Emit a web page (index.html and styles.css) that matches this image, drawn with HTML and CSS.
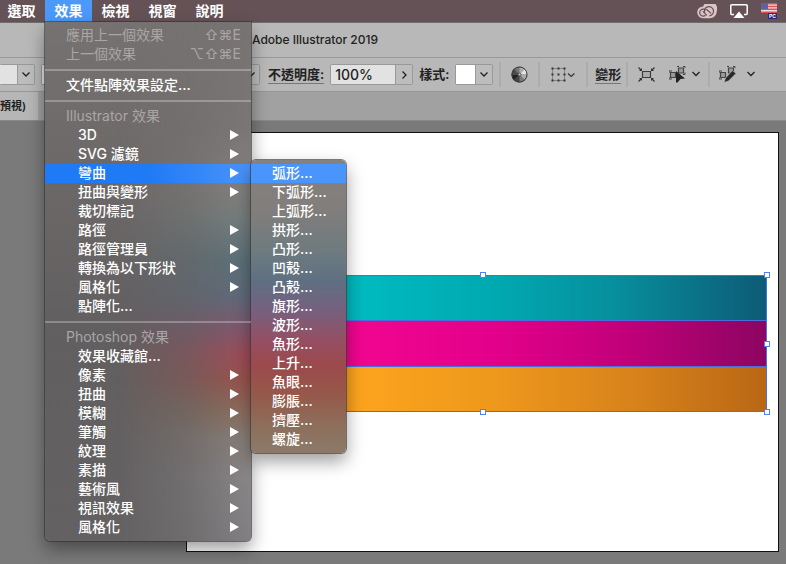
FILE: index.html
```
<!DOCTYPE html>
<html lang="zh-Hant">
<head>
<meta charset="utf-8">
<title>Adobe Illustrator 2019</title>
<link rel="stylesheet" href="styles.css">
</head>
<body>
<header class="menubar">
  <nav class="menubar-items">
    <button class="menubar-item">選取</button>
    <div class="menubar-slot">
      <button class="menubar-item open">效果</button>
      <ul class="menu">
        <li><button class="item top disabled">應用上一個效果<span class="keys">⇧⌘E</span></button></li>
        <li><button class="item top disabled">上一個效果<span class="keys">⌥⇧⌘E</span></button></li>
        <li class="rule"></li>
        <li><button class="item top">文件點陣效果設定...</button></li>
        <li class="rule"></li>
        <li class="item top disabled">Illustrator 效果</li>
        <li><button class="item more">3D</button></li>
        <li><button class="item more">SVG 濾鏡</button></li>
        <li class="has-sub">
          <button class="item more active">彎曲</button>
          <ul class="submenu">
            <li><button class="item chosen">弧形...</button></li>
            <li><button class="item">下弧形...</button></li>
            <li><button class="item">上弧形...</button></li>
            <li><button class="item">拱形...</button></li>
            <li><button class="item">凸形...</button></li>
            <li><button class="item">凹殼...</button></li>
            <li><button class="item">凸殼...</button></li>
            <li><button class="item">旗形...</button></li>
            <li><button class="item">波形...</button></li>
            <li><button class="item">魚形...</button></li>
            <li><button class="item">上升...</button></li>
            <li><button class="item">魚眼...</button></li>
            <li><button class="item">膨脹...</button></li>
            <li><button class="item">擠壓...</button></li>
            <li><button class="item">螺旋...</button></li>
          </ul>
        </li>
        <li><button class="item more">扭曲與變形</button></li>
        <li><button class="item">裁切標記</button></li>
        <li><button class="item more">路徑</button></li>
        <li><button class="item more">路徑管理員</button></li>
        <li><button class="item more">轉換為以下形狀</button></li>
        <li><button class="item more">風格化</button></li>
        <li><button class="item">點陣化...</button></li>
        <li class="rule"></li>
        <li class="item top disabled">Photoshop 效果</li>
        <li><button class="item">效果收藏館...</button></li>
        <li><button class="item more">像素</button></li>
        <li><button class="item more">扭曲</button></li>
        <li><button class="item more">模糊</button></li>
        <li><button class="item more">筆觸</button></li>
        <li><button class="item more">紋理</button></li>
        <li><button class="item more">素描</button></li>
        <li><button class="item more">藝術風</button></li>
        <li><button class="item more">視訊效果</button></li>
        <li><button class="item more">風格化</button></li>
      </ul>
    </div>
    <button class="menubar-item">檢視</button>
    <button class="menubar-item">視窗</button>
    <button class="menubar-item">說明</button>
  </nav>
  <div class="status">
    <svg width="20" height="15" viewBox="0 0 20 15">
      <path d="M6 14.200A5.900 5.900 0 0 1 6.200 2.400A7.200 7.200 0 0 1 19.800 7.200A7 7 0 0 1 12.800 14.200Z" fill="#dcc3c8"/>
      <path d="M8.900 6.400A3.500 3.500 0 1 0 8.500 11.200M10 11.400L5.800 7.400M7.800 9.200A4.600 4.600 0 1 1 12.400 11.800M14 9.400L9.500 5.200" fill="none" stroke="#655257" stroke-width="1.200"/>
    </svg>
    <svg width="18" height="15" viewBox="0 0 18 15">
      <path d="M4 10.500H1.800A1 1 0 0 1 .8 9.500V1.800A1 1 0 0 1 1.800 .8H16.200A1 1 0 0 1 17.200 1.800V9.500A1 1 0 0 1 16.200 10.500H14" fill="none" stroke="#fff" stroke-width="1.500"/>
      <path d="M9 7.500L14.500 14H3.500Z" fill="#fff"/>
    </svg>
    <svg width="17" height="16" viewBox="0 0 17 16">
      <path d="M0 0H16V10H0Z" fill="#f0dcdc"/>
      <path d="M0 .7H16M0 3.500H16M0 6.300H16M0 9.200H16" stroke="#d8545a" stroke-width="1.400"/>
      <path d="M0 0H7V6H0Z" fill="#62629a"/>
      <path d="M7 10H16V16H7Z" fill="#28287a"/>
      <text x="8" y="15" class="flag-text">PC</text>
    </svg>
  </div>
</header>

<div class="titlebar">Adobe Illustrator 2019</div>

<div class="controls">
  <div class="field">
    <input class="box stub" aria-label="筆畫">
    <button class="box drop" aria-label="展開"><svg width="8" height="5" viewBox="0 0 8 5"><path d="M.5 .5L4 4L7.500 .5"/></svg></button>
  </div>
  <div class="field profile">
    <input class="box" aria-label="描述檔">
    <button class="box drop" aria-label="展開"><svg width="8" height="5" viewBox="0 0 8 5"><path d="M.5 .5L4 4L7.500 .5"/></svg></button>
  </div>
  <label class="caption linked" for="opacity">不透明度:</label>
  <div class="field">
    <input class="box opacity" id="opacity" value="100%">
    <button class="box drop" aria-label="展開"><svg width="5" height="8" viewBox="0 0 5 8"><path d="M.5 .5L4 4L.5 7.500"/></svg></button>
  </div>
  <span class="caption">樣式:</span>
  <div class="field">
    <button class="box swatch" aria-label="樣式"></button>
    <button class="box drop" aria-label="展開"><svg width="8" height="5" viewBox="0 0 8 5"><path d="M.5 .5L4 4L7.500 .5"/></svg></button>
  </div>
  <div class="cell wheel">
    <button class="tool" aria-label="重新上色"><svg width="17" height="17" viewBox="0 0 17 17">
      <circle cx="8.500" cy="8.500" r="8" fill="#777"/>
      <path d="M8.500 8.500V.5A8 8 0 0 1 14 2.800Z" fill="#aaa"/>
      <path d="M8.500 8.500L14 2.800A8 8 0 0 1 16.500 8.500Z" fill="#e2e2e2"/>
      <path d="M8.500 8.500H16.500A8 8 0 0 1 14 14.200Z" fill="#aaa"/>
      <path d="M8.500 8.500L14 14.200A8 8 0 0 1 8.500 16.500Z" fill="#7a7a7a"/>
      <path d="M8.500 8.500V16.500A8 8 0 0 1 2.800 14.200Z" fill="#444"/>
      <path d="M8.500 8.500L2.800 14.200A8 8 0 0 1 .5 8.500Z" fill="#222"/>
      <path d="M8.500 8.500H.5A8 8 0 0 1 2.800 2.800Z" fill="#4c4c4c"/>
      <circle cx="8.500" cy="8.500" r="7.500" fill="none" stroke="#3a3a3a"/>
      <circle cx="8.500" cy="8.500" r="1.500" fill="#bbb" stroke="#444" stroke-width=".8"/>
    </svg></button>
  </div>
  <div class="cell align">
    <button class="tool" aria-label="對齊"><svg width="24" height="15" viewBox="0 0 24 15">
      <path d="M1.500 1.500H13.500V13.500H1.500Z" fill="none" stroke="#555" stroke-dasharray="1 1"/>
      <path d="M.5 .5H2.500V2.500H.5ZM6.500 .5H8.500V2.500H6.500ZM12.500 .5H14.500V2.500H12.500ZM.5 6.500H2.500V8.500H.5ZM6.500 6.500H8.500V8.500H6.500ZM12.500 6.500H14.500V8.500H12.500ZM.5 12.500H2.500V14.500H.5ZM6.500 12.500H8.500V14.500H6.500ZM12.500 12.500H14.500V14.500H12.500Z" fill="#333"/>
      <path d="M17 6.500L20.200 9.500L23.400 6.500" fill="none" stroke="#333" stroke-width="1.200"/>
    </svg></button>
  </div>
  <div class="cell transform"><a class="caption linked" href="#">變形</a></div>
  <div class="cell pair">
    <button class="tool" aria-label="隔離"><svg width="17" height="15" viewBox="0 0 17 15">
      <path d="M4.500 4.500H12.500V10.500H4.500Z" fill="#aaa" stroke="#3c3c3c" stroke-width="1.200"/>
      <path d="M.5 .5L3.500 3.500M16.500 .5L13.500 3.500M.5 14.500L3.500 11.500M16.500 14.500L13.500 11.500" stroke="#333" stroke-width="1.200"/>
      <path d="M4 4H1L4 1ZM13 4V1L16 4ZM4 11V14L1 11ZM13 11H16L13 14Z" fill="#333"/>
    </svg></button>
    <button class="tool" aria-label="選取類似"><svg width="31" height="17" viewBox="0 0 31 17">
      <path d="M1.500 6.500H6.500V11.500H1.500ZM9.500 2H14.500V7H9.500Z" fill="#999" stroke="#444" stroke-width="1.200"/>
      <path d="M0 5H3M0 5V7M0 13H3M0 13V11M8 .5H10M16 .5H14M16 .5V2M16 8.500V6.500M16 8.500H14" stroke="#444" fill="none"/>
      <path d="M7 5L16 12.500L11.500 13L8.500 16.500H7Z" fill="#222"/>
      <path d="M23.500 6L27 9.500L30.500 6" fill="none" stroke="#222" stroke-width="1.300"/>
    </svg></button>
  </div>
  <div class="cell edit">
    <button class="tool" aria-label="編輯"><svg width="36" height="17" viewBox="0 0 36 17">
      <path d="M1.500 6.500H6.500V11.500H1.500ZM9.500 2H14.500V7H9.500Z" fill="#999" stroke="#444" stroke-width="1.200"/>
      <path d="M0 5H3M0 5V7M0 13H3M0 13V11M8 .5H10M16 .5H14M16 .5V2" stroke="#444" fill="none"/>
      <path d="M13.500 4.500L17 7.500L9.500 15L5 16.500L6.500 12Z" fill="#2a2a2a" stroke="#b8b8b8" stroke-width=".7"/>
      <path d="M28.500 6L32 9.500L35.500 6" fill="none" stroke="#222" stroke-width="1.300"/>
    </svg></button>
  </div>
</div>

<div class="tabs"><div class="tab">預視)</div></div>

<main class="workspace">
  <div class="artboard">
    <div class="art">
      <div class="bar teal"></div>
      <div class="bar pink"></div>
      <div class="bar orange"></div>
      <i class="handle n"></i>
      <i class="handle ne"></i>
      <i class="handle e"></i>
      <i class="handle se"></i>
      <i class="handle s"></i>
    </div>
  </div>
</main>
</body>
</html>
```
FILE: styles.css
```
* {
  box-sizing: border-box;
}

body {
  margin: 0;
  min-height: 100vh;
  display: flex;
  flex-direction: column;
  overflow: hidden;
  background: #7a7a7a;
  font-family: Inter, "Noto Sans CJK TC", sans-serif;
  font-size: 14px;
  color: #222;
}

button,
input {
  margin: 0;
  padding: 0;
  border: 0;
  background: none;
  font: inherit;
  color: inherit;
}

ul {
  margin: 0;
  padding: 0;
  list-style: none;
}

svg {
  display: block;
}

/* System menu bar */
.menubar {
  display: flex;
  justify-content: space-between;
  height: 22px;
  background: #655257;
  color: #fff;
  position: relative;
  z-index: 2;
}

.menubar-items {
  display: flex;
  margin-left: -2px;
}

.menubar-item {
  display: block;
  width: 47px;
  height: 22px;
  line-height: 22px;
  font-weight: 700;
}

.menubar-item.open {
  background: #4a99fb;
}

.menubar-slot {
  position: relative;
}

.status {
  display: flex;
  align-items: center;
  gap: 13px;
  padding-right: 8px;
}

.flag-text {
  font-size: 5px;
  font-weight: 700;
  fill: #fff;
}

/* Drop-down menu */
.menu {
  position: absolute;
  top: 22px;
  left: 0;
  width: 206px;
  padding: 4px 0;
  color: #fff;
  font-weight: 500;
  background: linear-gradient(#767271, #6c6868 30%, #625f60 60%, #646162);
  border-radius: 0 0 5px 5px;
  box-shadow: 0 0 0 1px rgba(50, 50, 50, .6), 0 8px 18px rgba(0, 0, 0, .4);
}

.menu::before {
  content: "";
  position: absolute;
  inset: 0;
  border-radius: inherit;
  background: linear-gradient(#777372 0, #7a7675 20%, #858280 32%, #75807f 38%, #5b727b 46%, #5f6a7d 53%, #83566e 59%, #a14b58 64%, #9c524b 69%, #8e6e5c 75%, #8a8079 80%, #898688 88%, #828083);
  mask-image: linear-gradient(to right, transparent 35%, rgba(0, 0, 0, .4) 70%, #000);
}

.menu > li {
  position: relative;
}

.item {
  display: flex;
  align-items: center;
  justify-content: space-between;
  width: 100%;
  height: 19px;
  padding: 0 12px 2px 33px;
  line-height: 17px;
  text-align: left;
  white-space: nowrap;
}

.item.top {
  padding-left: 21px;
}

.item.disabled {
  padding-right: 10px;
  color: #a9a6a6;
  font-weight: 400;
}

.keys {
  font-family: Inter, "DejaVu Sans", sans-serif;
}

.item.more::after {
  content: "";
  border-left: 9px solid #fff;
  border-top: 5px solid transparent;
  border-bottom: 5px solid transparent;
}

.item.active {
  background: linear-gradient(to right, #1f7af5 50%, #4a94fb);
}

.rule {
  height: 12px;
  padding: 5px 0;
}

.rule::before {
  content: "";
  display: block;
  height: 2px;
  background: rgba(255, 255, 255, .27);
}

.submenu {
  position: absolute;
  top: -4px;
  left: 100%;
  width: 95px;
  padding: 4px 0;
  background: linear-gradient(#858180, #827e7c 16%, #6e7b7f 31%, #5e7082 41%, #75617f 51%, #964e62 62%, #9c4a4c 70%, #96584a 80%, #8d6f5c 91%, #8b7a69);
  border-radius: 5px;
  box-shadow: 0 0 0 1px rgba(60, 55, 55, .65), 0 8px 18px rgba(0, 0, 0, .4);
}

.submenu .item {
  padding-left: 21px;
}

.item.chosen {
  background: #4a95fc;
}

/* Application frame */
.titlebar {
  height: 36px;
  padding-left: 252px;
  background: #b8b8b8;
  border-top: 1px solid #6e6e6e;
  border-bottom: 1px solid #999;
  font-size: 12px;
  line-height: 34px;
  font-weight: 500;
}

.controls {
  display: flex;
  align-items: center;
  height: 34px;
  background: #b8b8b8;
  border-bottom: 1px solid #969696;
  white-space: nowrap;
}

.field {
  display: flex;
  flex: none;
  height: 21px;
  border: 1px solid #999;
  border-radius: 2px;
}

.box {
  height: 100%;
  background: #e2e2e2;
}

.stub {
  width: 17px;
}

.drop {
  display: flex;
  align-items: center;
  justify-content: center;
  width: 17px;
  background: #bdbdbd;
  border-left: 1px solid #999;
}

.drop path {
  fill: none;
  stroke: #222;
  stroke-width: 1.3;
}

.field:first-child {
  border-left: 0;
}

.profile {
  width: 219px;
  margin: 0 8px 0 6px;
}

.profile input {
  flex: 1;
  min-width: 0;
}

.opacity {
  width: 64px;
  padding-left: 4px;
  font-size: 14px;
  font-weight: 500;
}

.caption {
  margin-right: 6px;
  color: #222;
  font-size: 13px;
  line-height: 17px;
  font-weight: 600;
  text-decoration: none;
}

.field + .caption:not(.linked) {
  margin-left: 6px;
}

.caption.linked {
  border-bottom: 1px solid #777;
}

.swatch {
  width: 19px;
  background: #fff;
}

.cell {
  display: flex;
  align-items: center;
  height: 25px;
  border-left: 2px solid #acacac;
}

.wheel {
  margin-left: 6px;
  padding: 0 10px;
}

.align {
  padding: 0 11px;
}

.transform {
  padding-left: 7px;
}

.transform .caption {
  margin-right: 5px;
}

.pair {
  gap: 14px;
  padding: 0 8px 0 10px;
}

.edit {
  padding-left: 9px;
}

.tabs {
  display: flex;
  height: 29px;
  background: #a1a1a1;
  border-bottom: 1px solid #8a8a8a;
}

.tab {
  width: 38px;
  background: #b6b6b6;
  font-size: 11px;
  line-height: 28px;
  font-weight: 600;
}

/* Canvas */
.workspace {
  flex: 1;
  display: flex;
  padding: 11px 7px 12px 186px;
  background: #7a7a7a;
}

.artboard {
  flex: 1;
  padding: 142px 11px 0 12px;
  background: #fff;
  border: 1px solid #111;
}

.art {
  position: relative;
  display: grid;
  grid-template-rows: 1fr 1fr 1fr;
  gap: 1px;
  height: 137px;
  background: #4a6fdc;
  border: 1px solid #3f73e8;
}

.teal {
  background: linear-gradient(to right, #00b9bf 30%, #00a9b1 52%, #078f9d 73%, #0d5b76);
}

.pink {
  background: linear-gradient(to right, #f0058f 30%, #e3008a 52%, #c2007a 75%, #8c0561);
}

.orange {
  background: linear-gradient(to right, #fba31e 30%, #ee981c 52%, #d9841b 75%, #b96715);
}

.handle {
  position: absolute;
  width: 6px;
  height: 6px;
  background: #fff;
  border: 1px solid #4f80ff;
}

.n,
.s {
  left: calc(50% - 3px);
}

.n,
.ne {
  top: -4px;
}

.s,
.se {
  bottom: -4px;
}

.ne,
.e,
.se {
  right: -4px;
}

.e {
  top: calc(50% - 3px);
}
```
